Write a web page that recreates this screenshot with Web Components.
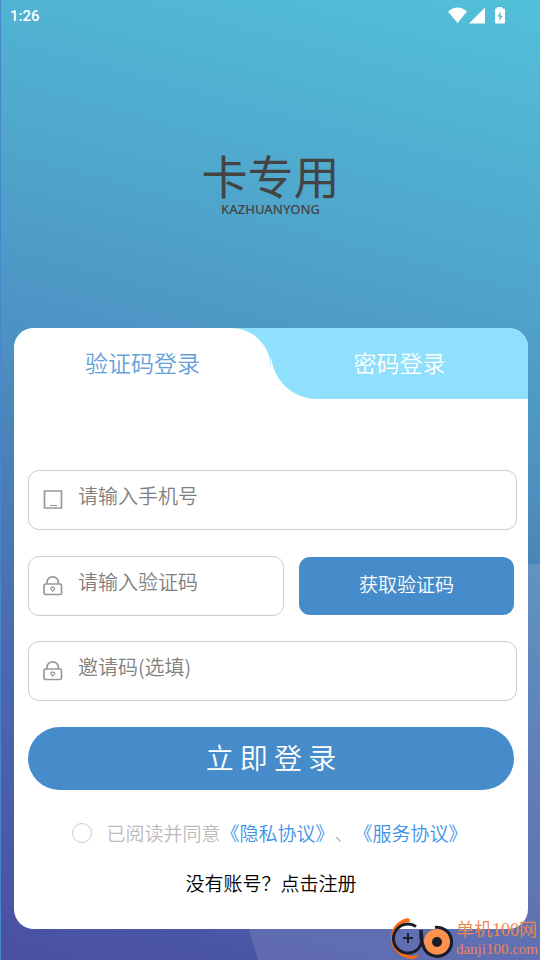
<!DOCTYPE html>
<html lang="zh-CN">
<head>
<meta charset="utf-8">
<meta name="viewport" content="width=device-width, initial-scale=1">
<title>登录</title>
<style>
  html, body { margin: 0; min-height: 100%; }
  body { font-family: "Noto Sans CJK SC", sans-serif; font-weight: 350; color: #000; }
</style>
</head>
<body>
<login-page>
  <status-bar slot="status" time="1:26"></status-bar>
  <brand-logo slot="brand" name="卡专用" latin="KAZHUANYONG"></brand-logo>
  <login-card>
    <login-tabs slot="tabs" first="验证码登录" second="密码登录"></login-tabs>
    <form-field icon="phone" type="tel" placeholder="请输入手机号"></form-field>
    <code-row>
      <form-field icon="lock" type="text" placeholder="请输入验证码"></form-field>
      <action-button slot="action">获取验证码</action-button>
    </code-row>
    <form-field icon="lock" type="text" placeholder="邀请码(选填)"></form-field>
    <action-button large>立 即 登 录</action-button>
    <agreement-row></agreement-row>
    <register-link>没有账号？点击注册</register-link>
  </login-card>
  <site-mark slot="mark"></site-mark>
</login-page>

<script>
function define(name, render) {
  customElements.define(name, class extends HTMLElement {
    connectedCallback() {
      if (this.shadowRoot) return;
      const t = document.createElement('template');
      t.innerHTML = '<style>*{box-sizing:border-box}:host{display:block;box-sizing:border-box}button,input{font:inherit;margin:0}</style>' + render(this);
      this.attachShadow({ mode: 'open' }).append(t.content.cloneNode(true));
    }
  });
}

define('login-page', () => `
<style>
  :host { position: relative; min-height: 100vh; overflow: hidden; border-left: 1px solid #4488c8;
    background: linear-gradient(195deg, #52c0d9 0%, #50aace 22%, #4d8fc2 45%, #4a85ba 51%, #4a6ab0 72%, #4a50a1 100%); }
  .disc { position: absolute; width: 582px; height: 582px; right: -281px; top: 564px; border-radius: 50%;
    background: rgba(255,255,255,.12); }
  .content { position: relative; display: flex; flex-direction: column; }
  main { padding: 0 12px 31px 13px; }
</style>
<div class="disc"></div>
<div class="content">
  <slot name="status"></slot>
  <slot name="brand"></slot>
  <main><slot></slot></main>
</div>
<slot name="mark"></slot>`);

define('status-bar', el => `
<style>
  :host { display: flex; justify-content: space-between; align-items: center; height: 30px; padding: 1px 35px 0 9px;
    color: #fff; font: 500 15px/20px Roboto, sans-serif; }
  svg { display: block; }
</style>
<span>${el.getAttribute('time')}</span>
<svg width="57" height="18" viewBox="0 0 57 18" fill="#fff" aria-hidden="true">
  <path d="M0 4.500Q9.500-3.500 19 4.500L9.500 16Z"/>
  <path d="M21 16.500 37 .5v16Z"/>
  <path fill-rule="evenodd" d="M49 0h5v1.500h2q1 0 1 1v13q0 1-1 1h-8q-1 0-1-1v-13q0-1 1-1h1ZM52.500 4.500 49.500 9.500h2v4.500l3.200-5.200h-2.200Z"/>
</svg>`);

define('brand-logo', el => `
<style>
  :host { display: flex; flex-direction: column; align-items: center; height: 298px; padding-top: 121px; color: #444; }
  h1 { margin: 0; font-size: 46px; line-height: 46px; font-weight: 400; }
  span { margin-top: 5px; font: 500 13px/14px "Noto Sans", sans-serif; }
</style>
<h1>${el.getAttribute('name')}</h1><span>${el.getAttribute('latin')}</span>`);

define('login-card', () => `
<style>
  :host { background: #fff; border-radius: 20px; overflow: hidden; }
  form { display: flex; flex-direction: column; gap: 26px; padding: 71px 11px 32px 14px; margin: 0; }
</style>
<slot name="tabs"></slot>
<form><slot></slot></form>`);

define('login-tabs', el => `
<style>
  :host { display: grid; grid-template-columns: 1fr 1fr; height: 71px; font-size: 23px; line-height: 32px; }
  .first { background: #8fe0fc; }
  button { display: block; width: 100%; height: 71px; border: 0; padding: 0 0 4px; }
  .first button { background: #fff; color: #64a0d8; border-radius: 0 40px 0 0; }
  .second button { background: #8fe0fc; color: #fff; border-radius: 0 0 0 46px; }
  .second { background: #fff; }
</style>
<div class="first"><button type="button">${el.getAttribute('first')}</button></div>
<div class="second"><button type="button">${el.getAttribute('second')}</button></div>`);

const icons = {
  phone: '<path d="M1.500 2h17v17h-17Z"/><path stroke-width="1" d="M7 16.500h7"/>',
  lock: '<rect x="1" y="9" width="17.500" height="10.500" rx="1.500"/><path d="M4 9V7.500a5.700 5.700 0 0 1 11.400 0v1.500"/><path stroke-width="1.200" d="M9.700 16.200 8.100 14.200a1.100 1.100 0 0 1 1.600-1.700 1.100 1.100 0 0 1 1.600 1.700Z"/>'
};
define('form-field', el => `
<style>
  :host { min-width: 0; }
  label { display: flex; align-items: flex-start; gap: 14px; height: 60px; padding: 10px 14px 0 14px; border: 1px solid #ccc; border-radius: 11px; background: #fff; }
  svg { flex: none; margin-top: 8px; }
  input { flex: 1; min-width: 0; width: 100%; height: 30px; border: 0; padding: 0; outline: 0; background: none; font-size: 20px; line-height: 30px; color: #333; }
  input::placeholder { color: #808080; opacity: 1; }
</style>
<label>
  <svg width="21" height="21" viewBox="0 0 21 21" fill="none" stroke="#999" stroke-width="1.700" aria-hidden="true">${icons[el.getAttribute('icon')]}</svg>
  <input type="${el.getAttribute('type')}" placeholder="${el.getAttribute('placeholder')}" aria-label="${el.getAttribute('placeholder')}">
</label>`);

define('code-row', () => `
<style>
  :host { display: grid; grid-template-columns: 256fr 215fr; gap: 15px; align-items: center; padding-right: 3px; margin-bottom: -1px; }
</style>
<slot></slot><slot name="action"></slot>`);

define('action-button', el => `
<style>
  button { display: block; width: 100%; height: 58px; border: 0; padding: 0 0 4px; border-radius: 11px; background: #468ccb; color: #fff; font-size: 19px; line-height: 28px; }
  :host([large]) { padding-right: 3px; }
  :host([large]) button { height: 63px; border-radius: 32px; font-size: 28px; line-height: 40px; }
</style>
<button type="button"><slot></slot></button>`);

define('agreement-row', () => `
<style>
  :host { display: flex; justify-content: center; align-items: center; padding: 3px 5px 0 0; font-size: 19px; line-height: 28px; color: #bbb; white-space: nowrap; }
  input { appearance: none; width: 20px; height: 20px; margin-right: 14px; border: 1px solid #ccc; border-radius: 50%; background: #fff; }
  input:checked { background: #468ccb; }
  a { color: #3c93e8; text-decoration: none; }
</style>
<input type="checkbox" id="agree"><label for="agree">已阅读并同意</label><a href="#privacy">《隐私协议》</a><span>、</span><a href="#terms">《服务协议》</a>`);

define('register-link', () => `
<style>
  :host { text-align: center; font-size: 19px; line-height: 28px; margin-top: -4px; padding-right: 3px; }
  a { color: #000; text-decoration: none; }
</style>
<a href="#register"><slot></slot></a>`);

define('site-mark', () => `
<style>
  :host { position: absolute; right: 2px; bottom: 0; display: flex; align-items: center; gap: 2px; color: #ef8550;
    font-family: "Liberation Serif", "Noto Sans CJK SC", serif; }
  div { display: flex; flex-direction: column; }
  b { font-weight: 350; font-size: 18px; line-height: 20px; white-space: nowrap; }
  span { font-size: 15px; line-height: 18px; }
</style>
<svg width="64" height="42" viewBox="0 0 64 42" fill="none" aria-hidden="true">
  <path d="M21 3.500Q18 2 20 1Q17-1 12 2C3 7 1 14 1 21c1 12 9 18 20 20q7 0 7-4l-6 1C9 36 4 30 4 21 4 12 10 4 21 3.500Z" fill="#ff6a0c"/>
  <path d="M26 8.500A14.500 14.500 0 1 0 28 31Q34 25 31 12" stroke="#191d2c" stroke-width="3"/>
  <path d="M18 15v10M13 20h10" stroke="#191d2c" stroke-width="2"/>
  <circle cx="47" cy="24" r="13" fill="#ff914d"/>
  <path d="M45 9.500A14.500 14.500 0 1 1 34 30Q30 22 31 12" stroke="#191d2c" stroke-width="3"/>
  <circle cx="47" cy="24" r="5" fill="#191d2c"/>
</svg>
<div><b>单机100网</b><span>danji100.com</span></div>`);
</script>
</body>
</html>
